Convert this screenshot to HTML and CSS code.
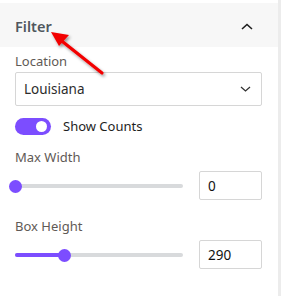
FILE: index.html
```html
<!DOCTYPE html>
<html lang="en">
<head>
<meta charset="UTF-8" />
<meta name="viewport" content="width=device-width, initial-scale=1" />
<title>Filter panel</title>
<link rel="stylesheet" href="styles.css">
</head>
<body>
<div class="panel">
  <div class="panel-head">
    <span class="panel-title">Filter</span>
    <svg class="chev" width="12" height="7" viewBox="0 0 12 7"><path d="M1 6 L6 1.5 L11 6" fill="none" stroke="#1e1e1e" stroke-width="1.6"/></svg>
  </div>

  <div class="panel-body">
    <div class="field">
      <label class="lbl">Location</label>
      <div class="select">
        <span>Louisiana</span>
        <svg width="11" height="6" viewBox="0 0 11 6"><path d="M1 1 L5.5 5 L10 1" fill="none" stroke="#333" stroke-width="1.3"/></svg>
      </div>
    </div>

    <div class="toggle-row">
      <span class="toggle"><span class="knob"></span></span>
      <span class="toggle-text">Show Counts</span>
    </div>

    <div class="field">
      <label class="lbl">Max Width</label>
      <div class="range-row">
        <div class="range">
          <div class="track"><div class="fill" style="width:0%"></div></div>
          <span class="thumb" style="left:0%"></span>
        </div>
        <div class="num">0</div>
      </div>
    </div>

    <div class="field">
      <label class="lbl">Box Height</label>
      <div class="range-row">
        <div class="range">
          <div class="track"><div class="fill" style="width:29%"></div></div>
          <span class="thumb" style="left:29%"></span>
        </div>
        <div class="num">290</div>
      </div>
    </div>
  </div>

  <!-- red pointer arrow -->
  <svg class="arrow" width="70" height="60" viewBox="0 0 70 60">
    <defs>
      <filter id="sh" x="-20%" y="-20%" width="150%" height="150%">
        <feDropShadow dx="1.5" dy="2" stdDeviation="1.5" flood-color="#000" flood-opacity="0.4"/>
      </filter>
    </defs>
    <g filter="url(#sh)">
      <line x1="60" y1="48" x2="16" y2="13" stroke="#f20000" stroke-width="3.2" stroke-linecap="round"/>
      <polygon points="9,7 27,10 17,21" fill="#f20000"/>
    </g>
  </svg>
</div>
</body>
</html>
```

FILE: styles.css
```css
body {
  margin: 0;
  padding: 0;
  background: #fff;
  font-family: "Noto Sans", "Open Sans", sans-serif;
}
.panel {
  position: relative;
  height: 296px;
  padding-top: 3px;
  box-sizing: border-box;
  border-right: 3px solid #ececec;
}

/* header */
.panel-head {
  height: 44px;
  background: #f7f7f7;
  display: flex;
  align-items: center;
  justify-content: space-between;
  padding: 2px 25px 0 15px;
  box-sizing: border-box;
}
.panel-title {
  font-size: 14.5px;
  font-weight: 600;
  color: #50575e;
}

/* body */
.panel-body {
  padding: 4px 16px 0 15px;
}
.field {
  display: flex;
  flex-direction: column;
}
.lbl {
  font-size: 13px;
  color: #5f5a56;
  line-height: 20px;
  margin-bottom: 1px;
}
.select {
  height: 34px;
  border: 1px solid #d6d6d6;
  border-radius: 2px;
  box-sizing: border-box;
  display: flex;
  align-items: center;
  justify-content: space-between;
  padding: 0 10px 0 8px;
  font-size: 13.5px;
  color: #2c2c2c;
}

/* toggle */
.toggle-row {
  display: flex;
  align-items: center;
  gap: 12px;
  margin: 11px 0 12px;
}
.toggle {
  width: 36px;
  height: 17px;
  border-radius: 9px;
  background: #7c4dff;
  display: flex;
  align-items: center;
  justify-content: flex-end;
  padding-right: 4px;
  box-sizing: border-box;
}
.knob {
  width: 11px;
  height: 11px;
  border-radius: 50%;
  background: #fff;
}
.toggle-text {
  font-size: 13px;
  color: #1e1e1e;
}

/* range */
.range-row {
  display: flex;
  align-items: center;
  gap: 16px;
  margin: 3px 0 16px;
}
.range {
  position: relative;
  width: 168px;
  height: 12px;
  display: flex;
  align-items: center;
}
.track {
  width: 100%;
  height: 4px;
  border-radius: 2px;
  background: #d8dadc;
}
.fill {
  height: 100%;
  border-radius: 2px;
  background: #7c4dff;
}
.thumb {
  position: absolute;
  top: 0;
  width: 13px;
  height: 13px;
  margin-left: -6px;
  border-radius: 50%;
  background: #7c4dff;
}
.num {
  width: 63px;
  height: 29px;
  border: 1px solid #d6d6d6;
  border-radius: 2px;
  box-sizing: border-box;
  display: flex;
  align-items: center;
  padding-left: 8px;
  font-size: 13.5px;
  color: #111;
}

.arrow {
  position: absolute;
  left: 42px;
  top: 25px;
}
```
